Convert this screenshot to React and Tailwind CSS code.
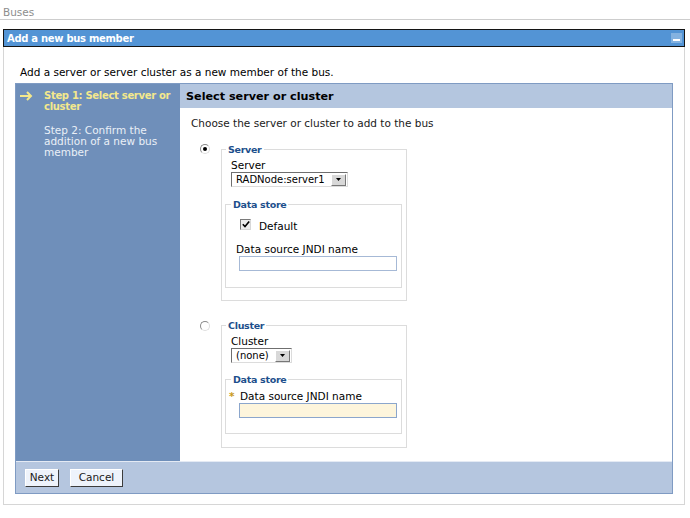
import React from "react";

function Radio({ checked, className = "" }) {
  return (
    <div
      className={`w-[10px] h-[10px] rounded-full border border-t-[#8a8a8a] border-l-[#8a8a8a] border-b-[#dedede] border-r-[#dedede] bg-white flex items-center justify-center ${className}`}
    >
      {checked && <div className="w-[4px] h-[4px] rounded-full bg-black" />}
    </div>
  );
}

function Select({ value, width }) {
  return (
    <div
      className={`${width} h-[15px] flex items-center bg-white border border-t-[#6f6f6f] border-l-[#6f6f6f] border-b-[#dcdcdc] border-r-[#dcdcdc] text-[10px] leading-[13px]`}
    >
      <span className="flex-1 pl-[4px] whitespace-nowrap overflow-hidden">{value}</span>
      <div className="w-[15px] h-[12px] mr-[1px] bg-[#d8d8d8] border border-t-white border-l-white border-b-[#777] border-r-[#777] flex items-center justify-center">
        <svg width="5" height="3" viewBox="0 0 5 3">
          <path d="M0 0h5L2.5 3z" fill="#000" />
        </svg>
      </div>
    </div>
  );
}

function Legend({ children, className = "" }) {
  return (
    <legend className={`px-[2px] text-[9.5px] font-bold tracking-[-0.3px] text-[#1d4f8c] leading-[13px] ${className}`}>
      {children}
    </legend>
  );
}

export default function App() {
  return (
    <div className="w-[690px] h-[518px] bg-white text-[10.5px] leading-[13px] text-black font-['DejaVu_Sans',sans-serif]">
      <div className="h-[20px] border-b border-[#cdcdcd] pl-[3px] pt-[6px] text-[#8d8d8d]">Buses</div>

      {/* title bar */}
      <div className="ml-[3px] mt-[9px] w-[682px] h-[18px] border border-[#141414] bg-[#5394d5] flex items-center justify-between pl-[3px] pr-[2px]">
        <span className="text-white text-[10px] font-bold tracking-[-0.3px]">Add a new bus member</span>
        <div className="w-[11px] h-[10px] bg-[#84b2e0] flex items-end justify-center pb-[2px]">
          <div className="w-[7px] h-[2px] bg-white" />
        </div>
      </div>

      {/* panel */}
      <div className="ml-[3px] w-[682px] h-[458px] border-x border-b border-[#d6d6d6] pt-[19px]">
        <div className="pl-[16px]">Add a server or server cluster as a new member of the bus.</div>

        <div className="ml-[11px] mt-[4px] w-[658px] h-[411px] border border-[#7f9bc3] flex flex-col">
          <div className="h-[377px] flex">
            {/* steps */}
            <div className="w-[164px] bg-[#6f8fba] pt-[6px] pr-[4px] leading-[11px]">
              <div className="flex">
                <div className="w-[28px] pl-[4px] pt-[1px]">
                  <svg width="13" height="10" viewBox="0 0 13 10">
                    <path d="M0 5h11M7 1l4 4-4 4" stroke="#f4e88c" strokeWidth="2" fill="none" />
                  </svg>
                </div>
                <div className="flex-1 text-[#f4e88c] text-[10px] font-bold tracking-[-0.3px]">
                  Step 1: Select server or cluster
                </div>
              </div>
              <div className="mt-[13px] pl-[28px] text-[#eaeff7]">
                Step 2: Confirm the addition of a new bus member
              </div>
            </div>

            {/* main */}
            <div className="flex-1 flex flex-col">
              <div className="h-[24px] bg-[#b4c6df] pl-[6px] flex items-center text-[11.2px] font-bold">
                Select server or cluster
              </div>
              <div className="flex-1 bg-white pl-[11px] pt-[9px]">
                <div className="text-[#1a1a1a]">Choose the server or cluster to add to the bus</div>

                {/* server row */}
                <div className="flex items-start ml-[9px] mt-[13px]">
                  <div className="w-[21px]">
                    <Radio checked className="mt-[1px]" />
                  </div>
                  <fieldset className="w-[186px] border border-[#dcdcdc] px-[3px] pb-[12px]">
                    <Legend className="ml-[1px]">Server</Legend>
                    <div className="pl-[6px] mt-[3px]">Server</div>
                    <div className="pl-[6px]">
                      <Select value="RADNode:server1" width="w-[117px]" />
                    </div>
                    <fieldset className="mt-[11px] w-[177px] border border-[#dcdcdc] pl-[5px] pb-[16px]">
                      <Legend>Data store</Legend>
                      <div className="flex items-start mt-[8px] ml-[9px]">
                        <div className="w-[11px] h-[11px] border border-t-[#7a7a7a] border-l-[#7a7a7a] border-b-[#d8d8d8] border-r-[#d8d8d8] bg-[#ededed] flex items-center justify-center">
                          <svg width="8" height="7" viewBox="0 0 8 7">
                            <path d="M0.8 3.2l2.2 2.4L7.2 0.6" stroke="#000" strokeWidth="1.6" fill="none" />
                          </svg>
                        </div>
                        <span className="ml-[8px] mt-[1px]">Default</span>
                      </div>
                      <div className="mt-[10px] ml-[5px]">Data source JNDI name</div>
                      <div className="ml-[8px] w-[158px] h-[15px] border border-[#a6b9d6] bg-white" />
                    </fieldset>
                  </fieldset>
                </div>

                {/* cluster row */}
                <div className="flex items-start ml-[9px] mt-[18px]">
                  <div className="w-[21px]">
                    <Radio className="mt-[2px]" />
                  </div>
                  <fieldset className="w-[186px] border border-[#dcdcdc] px-[3px] pb-[13px]">
                    <Legend className="ml-[1px]">Cluster</Legend>
                    <div className="pl-[6px] mt-[3px]">Cluster</div>
                    <div className="pl-[6px]">
                      <Select value="(none)" width="w-[61px]" />
                    </div>
                    <fieldset className="mt-[10px] w-[177px] border border-[#dcdcdc] pl-[5px] pb-[15px]">
                      <Legend>Data store</Legend>
                      <div className="flex mt-[4px]">
                        <span className="ml-[-2px] w-[11px] text-[#c99a1c] font-bold">*</span>
                        <span>Data source JNDI name</span>
                      </div>
                      <div className="ml-[8px] w-[158px] h-[15px] border border-[#8ba6cc] bg-[#fdf5dc]" />
                    </fieldset>
                  </fieldset>
                </div>
              </div>
            </div>
          </div>

          {/* footer */}
          <div className="h-[32px] border-t border-[#e4eaf4] bg-[#b5c6df] flex items-center gap-[11px] pl-[9px]">
            <button className="h-[18px] w-[34px] bg-[#eef3fb] border border-t-white border-l-white border-r-[#3c3c3c] border-b-[#3c3c3c] text-[10.5px] leading-[13px] text-[#1a1a1a]">
              Next
            </button>
            <button className="h-[18px] w-[53px] bg-[#eef3fb] border border-t-white border-l-white border-r-[#3c3c3c] border-b-[#3c3c3c] text-[10.5px] leading-[13px] text-[#1a1a1a]">
              Cancel
            </button>
          </div>
        </div>
      </div>
    </div>
  );
}
